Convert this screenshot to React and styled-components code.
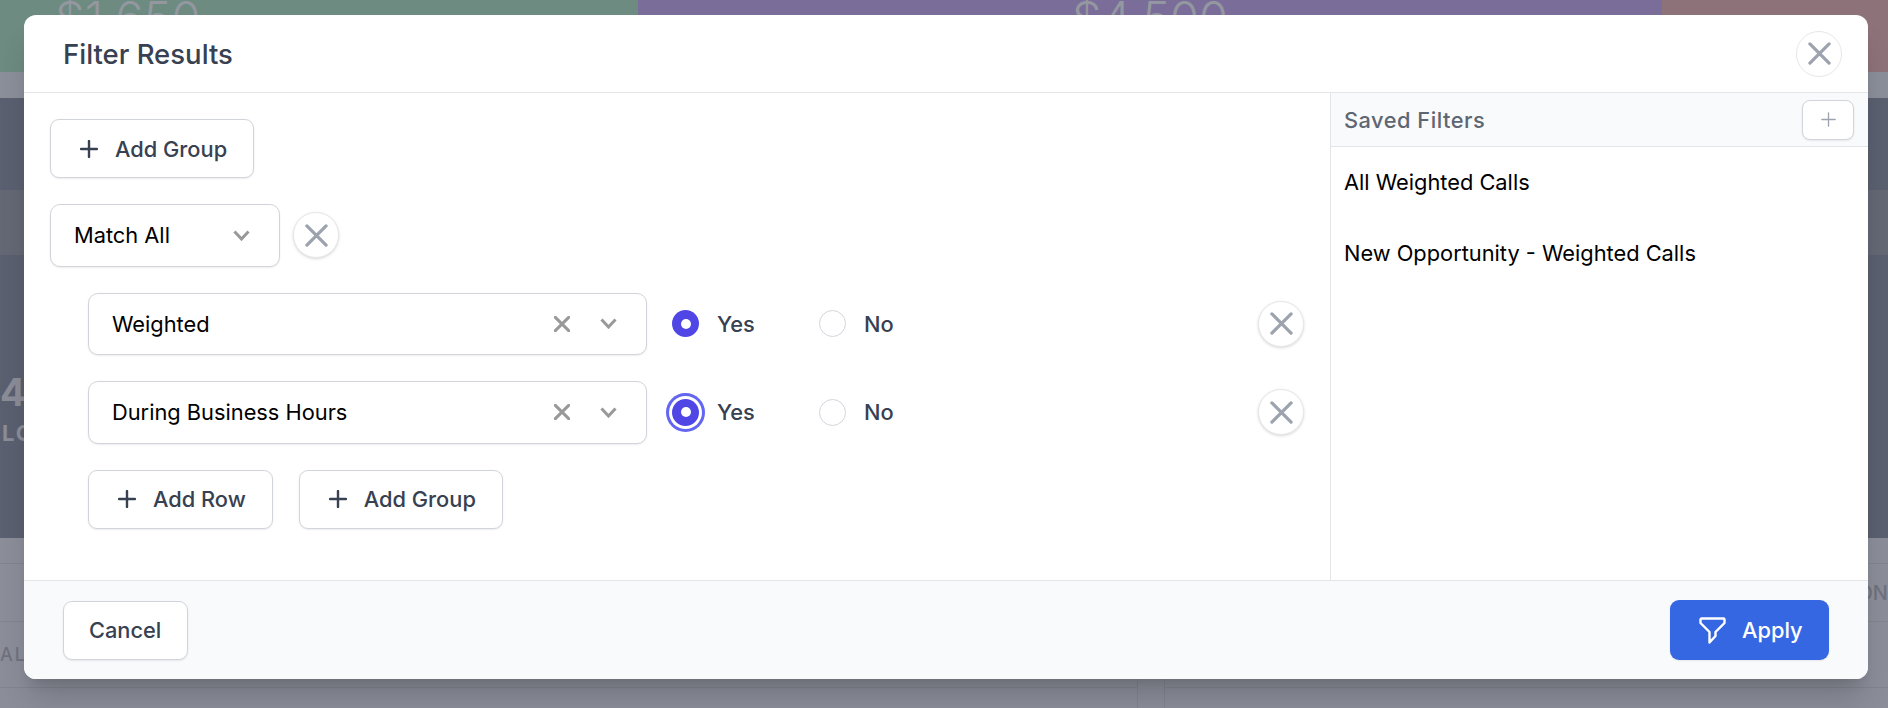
import React from 'react';
import styled, { createGlobalStyle } from 'styled-components';

const Global = createGlobalStyle`
  html, body { margin: 0; padding: 0; height: 708px; overflow: hidden; }
  body { font-family: Inter, "Noto Sans", sans-serif; background: #8b8e99; }
  * { box-sizing: border-box; }
`;

const Page = styled.div`
  position: relative;
  width: 1888px;
  height: 708px;
  overflow: hidden;
`;

/* dimmed dashboard behind the modal */
const StatRow = styled.div`
  display: grid;
  grid-template-columns: 638px 1024px 1fr;
  height: 72px;
  overflow: hidden;
`;

const Stat = styled.div`
  background: ${p => p.bg};
  color: #93979f;
  font-size: 47px;
  font-weight: 300;
  line-height: 1;
  padding-left: ${p => p.$left || 0}px;
  text-align: ${p => p.$align || 'left'};

  span { display: block; margin-top: -6px; }
`;

const GreyBand = styled.div`
  height: 26px;
  background: #8b8f99;
`;

const Hero = styled.div`
  height: 440px;
  background: #5b6070;
  padding-top: 92px;
  color: #8a8d98;
  font-weight: 700;
  overflow: hidden;
`;

const HeroStrip = styled.div`
  height: 65px;
  background: #646874;
  margin-bottom: 115px;
`;

const HeroNum = styled.div`
  font-size: 38px;
  line-height: 44px;
`;

const HeroLabel = styled.div`
  font-size: 22px;
  line-height: 30px;
  letter-spacing: 2px;
  margin-top: 4px;
  padding-left: 2px;
`;

const Lower = styled.div`
  display: grid;
  grid-template-columns: 1138px 1fr;
  column-gap: 26px;
  height: 170px;
  background: #8b8e99;
`;

const LowerPanel = styled.div`
  display: grid;
  grid-template-rows: 26px 58px 66px 1fr;
  border-right: ${p => p.$side === 'left' ? '1px solid #82858f' : '0'};
  border-left: ${p => p.$side === 'right' ? '1px solid #82858f' : '0'};
`;

const LowerRow = styled.div`
  display: flex;
  align-items: center;
  justify-content: ${p => p.$end ? 'flex-end' : 'flex-start'};
  border-bottom: 1px solid #82858f;
  color: #6f727e;
  font-size: ${p => p.$end ? 20 : 18}px;
  letter-spacing: ${p => p.$end ? 0 : 2}px;
  font-weight: 500;
`;

/* modal */
const ModalShadow = styled.div`
  position: absolute;
  left: 24px;
  top: 15px;
  width: 1844px;
  height: 664px;
  border-radius: 12px;
  box-shadow: 0 24px 30px -6px rgba(0,0,0,.16), 0 10px 12px -6px rgba(0,0,0,.1);
`;

const Modal = styled.div`
  position: absolute;
  left: 24px;
  top: 15px;
  width: 1844px;
  height: 664px;
  background: #fff;
  border-radius: 12px;
  overflow: hidden;
  display: flex;
  flex-direction: column;
`;

const ModalHead = styled.div`
  height: 78px;
  flex: none;
  display: flex;
  align-items: center;
  justify-content: space-between;
  padding: 0 26px 0 39px;
  border-bottom: 1px solid #e3e5e9;
`;

const Title = styled.div`
  font-size: 27.5px;
  font-weight: 500;
  color: #374151;
`;

const CircleBtn = styled.button`
  flex: none;
  width: 46px;
  height: 46px;
  padding: 0;
  border-radius: 50%;
  border: 1px solid #e5e7eb;
  background: #fff;
  display: inline-flex;
  align-items: center;
  justify-content: center;
  color: #9ca3af;
  box-shadow: ${p => p.$flat ? 'none' : '0 1px 3px rgba(0,0,0,.16)'};
  margin-left: ${p => p.$push ? 'auto' : '0'};
`;

const ModalBody = styled.div`
  flex: 1;
  display: grid;
  grid-template-columns: 1fr 538px;
  min-height: 0;
`;

const LeftPane = styled.div`
  padding: 26px 26px 0;
  display: flex;
  flex-direction: column;
`;

const Btn = styled.button`
  display: inline-flex;
  align-items: center;
  gap: 17px;
  height: 59px;
  padding: 0 26px 0 ${p => p.$pl || 29}px;
  border: 1px solid #d1d5db;
  border-radius: 9px;
  background: #fff;
  color: #374151;
  font-family: inherit;
  font-size: 21.8px;
  font-weight: 500;
  box-shadow: 0 1px 2px rgba(0,0,0,.08);
  white-space: nowrap;
`;

const GroupRow = styled.div`
  display: flex;
  align-items: center;
  gap: 13px;
  margin-top: 26px;
`;

const Select = styled.div`
  flex: none;
  width: ${p => p.width}px;
  height: 62.5px;
  display: flex;
  align-items: center;
  padding: 0 29px 0 23px;
  border: 1px solid #d1d5db;
  border-radius: 10px;
  background: #fff;
  color: #000;
  font-size: 21.8px;
  box-shadow: 0 1px 2px rgba(0,0,0,.08);
`;

const SelectValue = styled.span`
  flex: 1;
`;

const SelectIcon = styled.span`
  display: inline-flex;
  color: #999;
  margin-left: ${p => p.$gap || 0}px;
`;

const Rows = styled.div`
  margin: 26px 0 0 38px;
  display: flex;
  flex-direction: column;
  gap: 26px;
`;

const Row = styled.div`
  display: flex;
  align-items: center;
`;

const RadioGroup = styled.div`
  display: flex;
  margin-left: 25px;
`;

const RadioOption = styled.label`
  width: 147px;
  display: flex;
  align-items: center;
  gap: 18px;
  color: #374151;
  font-size: 21.8px;
  font-weight: 500;
`;

const RadioDot = styled.span`
  flex: none;
  width: 27px;
  height: 27px;
  border-radius: 50%;
  background: ${p => p.$on ? '#4f46e5' : '#fff'};
  border: ${p => p.$on ? '0' : '1px solid #d1d5db'};
  display: inline-flex;
  align-items: center;
  justify-content: center;
  box-shadow: ${p => p.$focus ? '0 0 0 3px #fff, 0 0 0 6px #6366f1' : 'none'};

  &::after {
    content: '';
    width: 10px;
    height: 10px;
    border-radius: 50%;
    background: ${p => p.$on ? '#fff' : 'transparent'};
  }
`;

const BtnRow = styled.div`
  display: flex;
  gap: 26px;
`;

const RightPane = styled.div`
  border-left: 1px solid #e3e5e9;
  display: flex;
  flex-direction: column;
`;

const SavedHead = styled.div`
  height: 54px;
  flex: none;
  display: flex;
  align-items: center;
  justify-content: space-between;
  padding: 0 14px 0 13px;
  background: #f9fafb;
  border-bottom: 1px solid #e3e5e9;
`;

const SavedTitle = styled.div`
  font-size: 21.8px;
  font-weight: 500;
  letter-spacing: .5px;
  color: #5f6673;
`;

const SmallAdd = styled.button`
  width: 52px;
  height: 40px;
  padding: 0;
  border: 1px solid #d1d5db;
  border-radius: 8px;
  background: #fff;
  color: #9ca3af;
  display: inline-flex;
  align-items: center;
  justify-content: center;
  box-shadow: 0 1px 2px rgba(0,0,0,.08);
`;

const SavedItem = styled.div`
  height: 71px;
  display: flex;
  align-items: center;
  padding: 0 0 2px 13px;
  color: #000;
  font-size: 21.8px;
`;

const ModalFoot = styled.div`
  height: 99px;
  flex: none;
  display: flex;
  align-items: center;
  justify-content: space-between;
  padding: 0 39px;
  background: #f9fafb;
  border-top: 1px solid #e3e5e9;
`;

const ApplyBtn = styled.button`
  display: inline-flex;
  align-items: center;
  gap: 16px;
  height: 60px;
  width: 159px;
  padding: 0 0 0 29px;
  border: 0;
  border-radius: 9px;
  background: #3667e3;
  color: #fff;
  font-family: inherit;
  font-size: 21.8px;
  font-weight: 500;
  box-shadow: 0 1px 2px rgba(0,0,0,.08);
`;

function Cross({ size = 23, weight = 3.4 }) {
  return (
    <svg width={size} height={size} viewBox="0 0 24 24" fill="none" stroke="currentColor" strokeWidth={weight} strokeLinecap="round">
      <path d="M2 2l20 20M22 2L2 22" />
    </svg>
  );
}

function Chevron() {
  return (
    <svg width="17" height="11" viewBox="0 0 17 11" fill="none" stroke="currentColor" strokeWidth="3">
      <path d="M1.5 1.5l7 7.5 7-7.5" />
    </svg>
  );
}

function PlusIcon({ size = 18, weight = 2.4 }) {
  return (
    <svg width={size} height={size} viewBox="0 0 18 18" fill="none" stroke="currentColor" strokeWidth={weight} strokeLinecap="round">
      <path d="M9 1v16M1 9h16" />
    </svg>
  );
}

function Funnel() {
  return (
    <svg width="27" height="27" viewBox="0 0 27 27" fill="none" stroke="currentColor" strokeWidth="2.4" strokeLinejoin="round">
      <path d="M2.5 1.5h22a1 1 0 0 1 1 1v3.500l-9 9v4l-6 6.500v-10.500l-9-9V2.500a1 1 0 0 1 1-1z" />
    </svg>
  );
}

const filterRows = [
  { name: 'Weighted', focus: false },
  { name: 'During Business Hours', focus: true },
];

const savedFilters = ['All Weighted Calls', 'New Opportunity - Weighted Calls'];

export default function App() {
  return (
    <>
      <Global />
      <Page>
        <StatRow>
          <Stat bg="#6d8b80" $left={55}><span>$1,650</span></Stat>
          <Stat bg="#7b6d9a" $align="center"><span>$4,500</span></Stat>
          <Stat bg="#8e727a" />
        </StatRow>
        <GreyBand />
        <Hero>
          <HeroStrip />
          <HeroNum>4</HeroNum>
          <HeroLabel>LOCATIONS</HeroLabel>
        </Hero>
        <Lower>
          <LowerPanel $side="left">
            <LowerRow />
            <LowerRow />
            <LowerRow>ALL</LowerRow>
          </LowerPanel>
          <LowerPanel $side="right">
            <LowerRow />
            <LowerRow $end>ON</LowerRow>
            <LowerRow />
          </LowerPanel>
        </Lower>

        <ModalShadow />
        <Modal>
          <ModalHead>
            <Title>Filter Results</Title>
            <CircleBtn $flat><Cross /></CircleBtn>
          </ModalHead>

          <ModalBody>
            <LeftPane>
              <div>
                <Btn><PlusIcon /> Add Group</Btn>
              </div>

              <GroupRow>
                <Select width={230}>
                  <SelectValue>Match All</SelectValue>
                  <SelectIcon $gap={10}><Chevron /></SelectIcon>
                </Select>
                <CircleBtn><Cross /></CircleBtn>
              </GroupRow>

              <Rows>
                {filterRows.map(r => (
                  <Row key={r.name}>
                    <Select width={559}>
                      <SelectValue>{r.name}</SelectValue>
                      <SelectIcon><Cross size={16} weight={4.5} /></SelectIcon>
                      <SelectIcon $gap={30}><Chevron /></SelectIcon>
                    </Select>
                    <RadioGroup>
                      <RadioOption><RadioDot $on $focus={r.focus} /> Yes</RadioOption>
                      <RadioOption><RadioDot /> No</RadioOption>
                    </RadioGroup>
                    <CircleBtn $push><Cross /></CircleBtn>
                  </Row>
                ))}
                <BtnRow>
                  <Btn><PlusIcon /> Add Row</Btn>
                  <Btn><PlusIcon /> Add Group</Btn>
                </BtnRow>
              </Rows>
            </LeftPane>

            <RightPane>
              <SavedHead>
                <SavedTitle>Saved Filters</SavedTitle>
                <SmallAdd><PlusIcon size={15} weight={1.6} /></SmallAdd>
              </SavedHead>
              {savedFilters.map(f => <SavedItem key={f}>{f}</SavedItem>)}
            </RightPane>
          </ModalBody>

          <ModalFoot>
            <Btn $pl={25}>Cancel</Btn>
            <ApplyBtn><Funnel /> Apply</ApplyBtn>
          </ModalFoot>
        </Modal>
      </Page>
    </>
  );
}
